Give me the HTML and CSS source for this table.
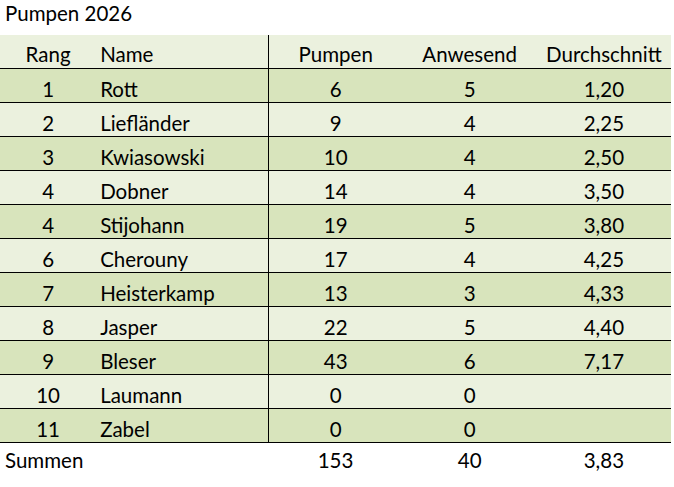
FILE: index.html
```html
<!DOCTYPE html>
<html lang="de">
<head>
<meta charset="utf-8">
<title>Pumpen 2026</title>
<link rel="stylesheet" href="styles.css">
</head>
<body>
<div class="title">Pumpen 2026</div>
<table class="sheet">
  <colgroup>
    <col class="c-rang"><col class="c-name"><col class="c-num"><col class="c-num"><col class="c-num">
  </colgroup>
  <thead>
    <tr class="head">
      <th class="ctr">Rang</th><th class="name">Name</th><th class="ctr sep">Pumpen</th><th class="ctr">Anwesend</th><th class="ctr">Durchschnitt</th>
    </tr>
  </thead>
  <tbody>
    <tr class="dark"><td class="ctr">1</td><td class="name">Rott</td><td class="ctr sep">6</td><td class="ctr">5</td><td class="ctr">1,20</td></tr>
    <tr class="light"><td class="ctr">2</td><td class="name">Liefländer</td><td class="ctr sep">9</td><td class="ctr">4</td><td class="ctr">2,25</td></tr>
    <tr class="dark"><td class="ctr">3</td><td class="name">Kwiasowski</td><td class="ctr sep">10</td><td class="ctr">4</td><td class="ctr">2,50</td></tr>
    <tr class="light"><td class="ctr">4</td><td class="name">Dobner</td><td class="ctr sep">14</td><td class="ctr">4</td><td class="ctr">3,50</td></tr>
    <tr class="dark"><td class="ctr">4</td><td class="name">Stijohann</td><td class="ctr sep">19</td><td class="ctr">5</td><td class="ctr">3,80</td></tr>
    <tr class="light"><td class="ctr">6</td><td class="name">Cherouny</td><td class="ctr sep">17</td><td class="ctr">4</td><td class="ctr">4,25</td></tr>
    <tr class="dark"><td class="ctr">7</td><td class="name">Heisterkamp</td><td class="ctr sep">13</td><td class="ctr">3</td><td class="ctr">4,33</td></tr>
    <tr class="light"><td class="ctr">8</td><td class="name">Jasper</td><td class="ctr sep">22</td><td class="ctr">5</td><td class="ctr">4,40</td></tr>
    <tr class="dark"><td class="ctr">9</td><td class="name">Bleser</td><td class="ctr sep">43</td><td class="ctr">6</td><td class="ctr">7,17</td></tr>
    <tr class="light"><td class="ctr">10</td><td class="name">Laumann</td><td class="ctr sep">0</td><td class="ctr">0</td><td class="ctr"></td></tr>
    <tr class="dark"><td class="ctr">11</td><td class="name">Zabel</td><td class="ctr sep">0</td><td class="ctr">0</td><td class="ctr"></td></tr>
  </tbody>
  <tfoot>
    <tr class="sum"><td class="left" colspan="2">Summen</td><td class="ctr">153</td><td class="ctr">40</td><td class="ctr">3,83</td></tr>
  </tfoot>
</table>
</body>
</html>
```
FILE: styles.css
```css
html, body {
  margin: 0;
  padding: 0;
  background: #ffffff;
}
body {
  font-family: "Lato", "Liberation Sans", sans-serif;
  font-size: 20.5px;
  color: #000000;
  width: 674px;
  height: 487px;
  overflow: hidden;
}
.title {
  height: 35px;
  box-sizing: border-box;
  padding: 0 0 0 5px;
  line-height: 26px;
}
.sheet {
  border-collapse: collapse;
  table-layout: fixed;
  width: 671px;
}
.c-rang { width: 96px; }
.c-name { width: 172px; }
.c-num { width: 134px; }
.sheet th, .sheet td {
  height: 34px;
  padding: 7px 0 0 0;
  box-sizing: border-box;
  font-weight: normal;
  line-height: 26px;
  vertical-align: top;
  white-space: nowrap;
}
.sheet thead th {
  height: 33px;
  padding-top: 6px;
}
.sheet thead th, .sheet tbody td {
  border-bottom: 1px solid #000000;
}
.head { background: #ebf1de; }
.dark { background: #d8e4bc; }
.light { background: #ebf1de; }
.ctr { text-align: center; }
.name { text-align: left; padding-left: 4px !important; }
.sep { border-left: 1px solid #000000; }
.sum td { background: #ffffff; height: 44px; padding-top: 4px; }
.left { text-align: left; padding-left: 5px !important; }
```
